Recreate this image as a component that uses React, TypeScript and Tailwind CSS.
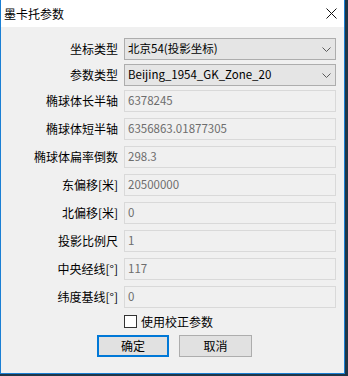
import React from 'react';

const font = { fontFamily: '"Noto Sans CJK SC", "Noto Sans", sans-serif' };

const fields = [
  { label: '椭球体长半轴', value: '6378245' },
  { label: '椭球体短半轴', value: '6356863.01877305' },
  { label: '椭球体扁率倒数', value: '298.3' },
  { label: '东偏移[米]', value: '20500000' },
  { label: '北偏移[米]', value: '0' },
  { label: '投影比例尺', value: '1' },
  { label: '中央经线[°]', value: '117' },
  { label: '纬度基线[°]', value: '0' },
];

function Chevron() {
  return (
    <svg width="9" height="5" viewBox="0 0 9 5" className="shrink-0">
      <path d="M0.5 0.5 L4.5 4.5 L8.5 0.5" fill="none" stroke="#5a5a5a" strokeWidth="1" />
    </svg>
  );
}

function Combo({ label, value }: { label: string; value: string }) {
  return (
    <div className="flex items-center h-[22px]">
      <div className="w-[117px] text-right text-black">{label}</div>
      <div className="ml-[6px] w-[212px] h-[22px] border border-[#adadad] bg-[#e5e5e5] flex items-center justify-between pl-[3px] pr-[4px]">
        <span className="text-black leading-none text-[11.5px]">{value}</span>
        <Chevron />
      </div>
    </div>
  );
}

function Field({ label, value }: { label: string; value: string }) {
  return (
    <div className="flex items-center h-[22px]">
      <div className="w-[117px] text-right text-black">{label}</div>
      <div className="ml-[6px] w-[212px] h-[22px] border border-[#d9d9d9] bg-[#f0f0f0] flex items-center pl-[3px]">
        <span className="text-[#6d6d6d] leading-none text-[11.5px]">{value}</span>
      </div>
    </div>
  );
}

export default function App() {
  return (
    <div className="w-[348px] h-[376px] bg-[#1f3647] overflow-hidden text-[12px]" style={font}>
      <div className="w-[345px] h-[374px] border border-t-0 border-[#1a7fd4] bg-[#f0f0f0] flex flex-col">
        {/* title bar */}
        <div className="h-[27px] bg-white flex items-center justify-between pl-[3px] pr-[7px]">
          <span className="text-black text-[12px]">墨卡托参数</span>
          <svg width="11" height="11" viewBox="0 0 11 11">
            <path d="M0.5 0.5 L10.5 10.5 M10.5 0.5 L0.5 10.5" stroke="#111" strokeWidth="1" />
          </svg>
        </div>

        <div className="flex flex-col pt-[11px]">
          <div className="flex flex-col gap-[4px]">
            <Combo label="坐标类型" value="北京54(投影坐标)" />
            <Combo label="参数类型" value="Beijing_1954_GK_Zone_20" />
          </div>
          <div className="flex flex-col gap-[6px] mt-[4px]">
            {fields.map((f) => (
              <Field key={f.label} label={f.label} value={f.value} />
            ))}
          </div>

          <div className="flex items-center mt-[7px] ml-[123px] h-[13px]">
            <div className="w-[13px] h-[13px] border border-[#333] bg-white" />
            <span className="ml-[4px] text-black">使用校正参数</span>
          </div>

          <div className="flex mt-[7px] ml-[96px] gap-[10px]">
            <button className="w-[72px] h-[22px] border-2 border-[#0078d7] bg-[#e1e1e1] text-black">确定</button>
            <button className="w-[73px] h-[22px] border border-[#adadad] bg-[#e1e1e1] text-black">取消</button>
          </div>
        </div>
      </div>
    </div>
  );
}
